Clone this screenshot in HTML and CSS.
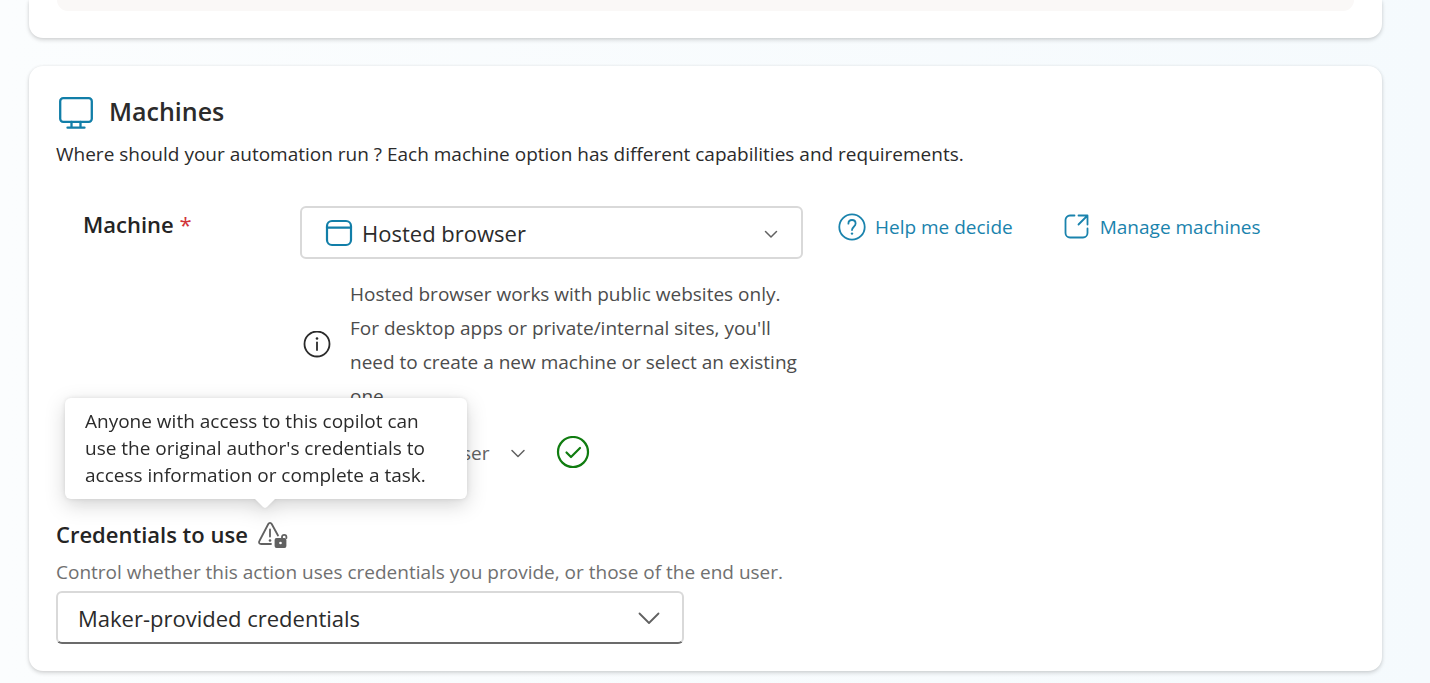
FILE: index.html
```html
<!DOCTYPE html>
<html lang="en">
<head>
<meta charset="utf-8">
<meta name="viewport" content="width=device-width, initial-scale=1">
<title>Machines</title>
<link rel="stylesheet" href="styles.css">
</head>
<body>
<main class="page">
  <section class="card card-previous"><div class="card-well"></div></section>

  <section class="card card-machines">
    <header class="card-header">
      <svg class="icon-monitor" viewBox="0 0 38 38" aria-hidden="true"><rect x="4.200" y="5.200" width="31.600" height="23.600" rx="3"/><path d="M15.500 29v5.500M24.500 29v5.500M11.500 34.700h17"/></svg>
      <h2 class="card-title">Machines</h2>
    </header>
    <p class="card-text">Where should your automation run ? Each machine option has different capabilities and requirements.</p>

    <div class="machine-row">
      <label class="field-label" for="machine">Machine <span class="required">*</span></label>
      <div class="machine-fields">
        <div class="machine-line">
          <div class="select-box select-machine">
            <svg class="icon-browser" viewBox="0 0 28 28" aria-hidden="true"><rect x="2" y="2" width="24" height="24" rx="5"/><path d="M2 8.700h24"/></svg>
            <select id="machine" class="select"><option>Hosted browser</option></select>
            <svg class="chevron chevron-small" viewBox="0 0 24 24" aria-hidden="true"><path d="M6.500 10.500l5.500 5.500 5.500-5.500"/></svg>
          </div>
          <nav class="links">
            <a class="link" href="#help"><svg class="icon-link" viewBox="0 0 28 28" aria-hidden="true"><circle cx="14" cy="14" r="12.700"/><path d="M10.400 10.700c0-2.300 1.500-3.700 3.600-3.700s3.600 1.400 3.600 3.500c0 3.200-3.600 3.300-3.600 6.600"/><circle class="dot" cx="14" cy="20.600" r="1.200"/></svg>Help me decide</a>
            <a class="link" href="#machines"><svg class="icon-link" viewBox="0 0 28 28" aria-hidden="true"><path d="M11.500 2.500H7A4.500 4.500 0 0 0 2.500 7v13A4.500 4.500 0 0 0 7 24.500h13a4.500 4.500 0 0 0 4.500-4.500v-4.500M15.500 2.500h9v9M24.500 2.500l-9 9"/></svg>Manage machines</a>
          </nav>
        </div>
        <div class="note">
          <svg class="icon-info" viewBox="0 0 28 28" aria-hidden="true"><circle cx="14" cy="13" r="12.500"/><path d="M14 11.300v7.700"/><circle class="dot" cx="14" cy="7.500" r="1.300"/></svg>
          <p class="note-text">Hosted browser works with public websites only. For desktop apps or private/internal sites, you'll need to create a new machine or select an existing one.</p>
        </div>
        <div class="connection">
          <button class="connection-button" type="button">Hosted browser<svg class="chevron chevron-small" viewBox="0 0 24 24" aria-hidden="true"><path d="M6 9.500l6 6 6-6"/></svg></button>
          <svg class="icon-check" viewBox="0 0 34 34" role="img" aria-label="Connected"><circle cx="17" cy="16" r="15"/><path d="M10.500 16.500l4.500 4.500 9-9"/></svg>
        </div>
      </div>
    </div>

    <div class="credentials-heading">
      <label class="field-label" for="credentials">Credentials to use</label>
      <svg class="icon-warning" viewBox="0 0 32 32" aria-describedby="credentials-tip"><path d="M15 26H5.200c-2 0-2.700-1.500-1.800-3L12.300 6c.8-1.500 2.600-1.500 3.400 0l6.300 11.500M14 11.500v7"/><circle class="dot" cx="14" cy="22.500" r="1.300"/><rect class="lock" x="19.500" y="21" width="10" height="8" rx="1"/><path d="M26 21v-2a2.200 2.200 0 0 1 4.400 0v1"/><circle class="keyhole" cx="24.500" cy="25" r="1.300"/></svg>
      <div class="tooltip" role="tooltip" id="credentials-tip">Anyone with access to this copilot can use the original author's credentials to access information or complete a task.</div>
    </div>
    <p class="hint">Control whether this action uses credentials you provide, or those of the end user.</p>
    <div class="select-box select-credentials">
      <select id="credentials" class="select"><option>Maker-provided credentials</option></select>
      <svg class="chevron chevron-large" viewBox="0 0 24 24" aria-hidden="true"><path d="M2.500 7.500l9.500 9.500 9.500-9.500"/></svg>
    </div>
  </section>
</main>
</body>
</html>
```
FILE: styles.css
```css
* { box-sizing: border-box; }

body {
  margin: 0;
  font-family: "Open Sans", "Noto Sans", sans-serif;
  font-size: 19px;
  line-height: 28px;
  color: #2b2b2b;
  background: linear-gradient(90deg, #fbfdfe, #f5fafd);
}

h2, p { margin: 0; }

svg {
  flex: none;
  fill: none;
  stroke: currentColor;
  stroke-width: 1.8;
  stroke-linecap: round;
  stroke-linejoin: round;
}

.dot { fill: currentColor; stroke: none; }

.page {
  display: flex;
  flex-direction: column;
  gap: 28px;
  padding: 0 48px 12px 29px;
}

.card {
  background: #fff;
  border-radius: 14px;
  box-shadow: 0 2px 4px rgba(0, 0, 0, 0.16), 0 0 3px rgba(0, 0, 0, 0.06);
}

.card-previous {
  padding: 0 28px 27px;
  border-radius: 0 0 14px 14px;
}

.card-well {
  height: 11px;
  background: #faf8f7;
  border-radius: 0 0 12px 12px;
}

.card-machines { padding: 27px; }

.card-header {
  display: flex;
  align-items: center;
  gap: 15px;
}

.icon-monitor { width: 38px; height: 38px; color: #117ea8; stroke-width: 2.300; }

.card-title {
  font-size: 25px;
  line-height: 36px;
  padding-bottom: 2px;
  font-weight: 600;
}

.card-text { margin-top: 9px; }

.machine-row {
  display: grid;
  grid-template-columns: 217px minmax(0, 1fr);
  margin-top: 38px;
  padding-left: 27px;
}

.field-label {
  font-size: 22px;
  line-height: 36px;
  font-weight: 600;
  color: #242424;
}

.required { color: #d13438; font-weight: 400; }

.machine-line { display: flex; gap: 35px; }

.select-box {
  position: relative;
  display: flex;
  align-items: center;
  color: #616161;
}

.select {
  width: 100%;
  height: 53px;
  padding: 0 60px 0 20px;
  font: inherit;
  font-size: 22px;
  color: #2b2b2b;
  background: #fff;
  border: 2px solid #d9d9d9;
  border-radius: 6px;
  appearance: none;
}

.select-machine { flex: 0 1 503px; }
.select-machine .select { padding-left: 60px; }

.icon-browser {
  position: absolute;
  left: 25px;
  width: 28px;
  height: 28px;
  color: #117ea8;
  stroke-width: 2.200;
}

.chevron { stroke-width: 1.500; }
.chevron-small { width: 24px; height: 24px; }
.chevron-large { width: 24px; height: 24px; stroke-width: 1.800; }
.select-box .chevron { position: absolute; right: 20px; pointer-events: none; }
.select-credentials .chevron { right: 23px; }

.links {
  display: flex;
  gap: 50px;
  height: 41px;
}

.link {
  display: flex;
  align-items: center;
  gap: 9px;
  color: #1a83ad;
  text-decoration: none;
  white-space: nowrap;
}

.icon-link { width: 28px; height: 28px; }

.note {
  display: flex;
  align-items: center;
  gap: 19px;
  max-width: 504px;
  margin-top: 18px;
  padding-left: 3px;
}

.icon-info { width: 28px; height: 28px; }

.note-text { line-height: 34px; color: #4c4c4c; }

.connection {
  display: flex;
  align-items: center;
  gap: 26px;
  height: 36px;
  margin-top: 22px;
  padding-left: 48px;
}

.connection-button {
  display: flex;
  align-items: center;
  gap: 16px;
  padding: 0;
  font: inherit;
  color: #616161;
  background: none;
  border: 0;
}

.icon-check { width: 34px; height: 34px; color: #107c10; stroke-width: 2.200; }

.credentials-heading {
  position: relative;
  display: flex;
  align-items: center;
  gap: 8px;
  margin-top: 45px;
}

.icon-warning { width: 32px; height: 32px; color: #616161; }
.lock { fill: currentColor; }
.keyhole { fill: #fff; stroke: none; }

.tooltip {
  position: absolute;
  left: 9px;
  bottom: 54px;
  width: 402px;
  padding: 10px 20px;
  line-height: 27px;
  background: #fff;
  border-radius: 6px;
  margin-bottom: -1px;
  filter: drop-shadow(0 6px 10px rgba(0, 0, 0, 0.16)) drop-shadow(0 0 2px rgba(0, 0, 0, 0.1));
}

.tooltip::after {
  content: "";
  position: absolute;
  top: 100%;
  left: 190px;
  width: 20px;
  height: 9px;
  background: #fff;
  clip-path: polygon(0 0, 100% 0, 60% 88%, 50% 100%, 40% 88%);
}

.hint { margin-top: 6px; color: #707070; }

.select-credentials { max-width: 628px; margin-top: 5px; }
.select-credentials .select { border-bottom-color: #6b6b6b; }
```
